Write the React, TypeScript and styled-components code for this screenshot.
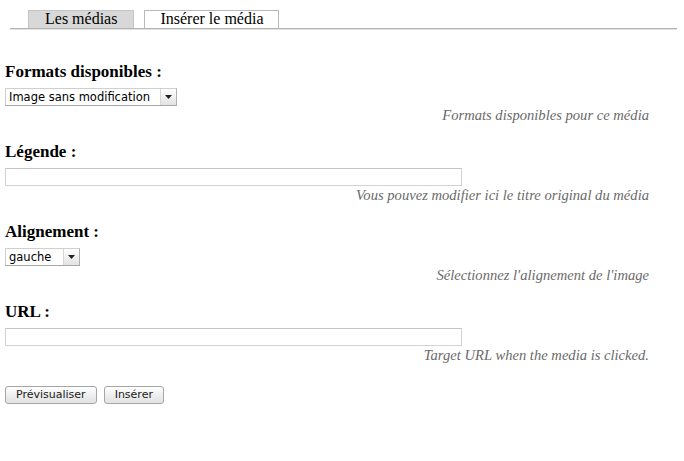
import React, { useState } from 'react';
import styled, { createGlobalStyle } from 'styled-components';

const GlobalStyle = createGlobalStyle`
  html, body {
    margin: 0;
    padding: 0;
    background: #ffffff;
  }
  body {
    font-family: "Liberation Serif", "Times New Roman", serif;
    color: #000000;
  }
`;

const Page = styled.div`
  width: 684px;
  height: 461px;
  padding-top: 10px;
  box-sizing: border-box;
`;

const TabBar = styled.ul`
  display: flex;
  gap: 10px;
  list-style: none;
  margin: 0 7px 0 10px;
  padding: 0 0 0 18px;
  border-bottom: 1px solid #b4b4b4;
  box-shadow: 0 1px 0 #e2e2e2;
`;

const Tab = styled.li<{ $active: boolean }>`
  height: 18px;
  box-sizing: border-box;
  padding: 0 ${({ $active }) => ($active ? 15 : 16)}px;
  font-size: 16px;
  line-height: 16px;
  background: ${({ $active }) => ($active ? '#ffffff' : '#d8d8d8')};
  border: 1px solid ${({ $active }) => ($active ? '#b8b8b8' : '#c4c4c4')};
  border-bottom: none;
  cursor: pointer;
`;

const Form = styled.form`
  padding: 34px 35px 0 5px;
`;

const Field = styled.div`
  display: flex;
  flex-direction: column;
  align-items: flex-start;
  margin-bottom: 20px;
`;

const Label = styled.label`
  font-size: 17px;
  font-weight: bold;
  line-height: 18px;
  margin-bottom: 7px;
`;

const SelectBox = styled.div<{ $width: number }>`
  display: flex;
  width: ${({ $width }) => $width}px;
  height: 18px;
  box-sizing: border-box;
  border: 1px solid #cfcfcf;
  border-right-color: #b0b0b0;
  border-bottom-color: #a8a8a8;
  background: #ffffff;
`;

const Select = styled.select`
  appearance: none;
  flex: 1;
  min-width: 0;
  border: none;
  outline: none;
  background: transparent;
  padding: 0 0 0 3px;
  margin: 0;
  font-family: "DejaVu Sans", Verdana, sans-serif;
  font-size: 11.5px;
  color: #000;
`;

const Arrow = styled.span`
  width: 15px;
  display: flex;
  align-items: center;
  justify-content: center;
  border-left: 1px solid #d6d6d6;
  background: linear-gradient(#ffffff, #e2e2e2);
`;

const TextInput = styled.input`
  width: 457px;
  height: 18px;
  box-sizing: border-box;
  border: 1px solid #d2d2d2;
  border-top-color: #c4c4c4;
  margin: 0;
  padding: 0 3px;
  outline: none;
  font-family: "DejaVu Sans", Verdana, sans-serif;
  font-size: 11px;
`;

const Help = styled.div`
  align-self: stretch;
  text-align: right;
  margin-top: 2px;
  font-size: 14.6px;
  line-height: 15px;
  font-style: italic;
  color: #6a6a6a;
`;

const Actions = styled.div`
  display: flex;
  gap: 7px;
  padding-top: 3px;
`;

const Button = styled.button`
  height: 18px;
  box-sizing: border-box;
  padding: 0 10px;
  border: 1px solid #a6a6a6;
  border-radius: 3px;
  background: linear-gradient(#ffffff, #ececec 60%, #e2e2e2);
  font-family: "DejaVu Sans", Verdana, sans-serif;
  font-size: 11px;
  color: #1a1a1a;
  line-height: 14px;
  cursor: pointer;
`;

const ArrowIcon = () => (
  <svg width="7" height="4" viewBox="0 0 7 4">
    <path d="M0 0h7L3.5 4z" fill="#222" />
  </svg>
);

const Dropdown: React.FC<{ width: number; options: string[] }> = ({ width, options }) => (
  <SelectBox $width={width}>
    <Select>
      {options.map((o) => (
        <option key={o}>{o}</option>
      ))}
    </Select>
    <Arrow>
      <ArrowIcon />
    </Arrow>
  </SelectBox>
);

export default function App() {
  const [tab, setTab] = useState('insert');

  return (
    <Page>
      <GlobalStyle />
      <TabBar>
        <Tab $active={tab === 'list'} onClick={() => setTab('list')}>
          Les médias
        </Tab>
        <Tab $active={tab === 'insert'} onClick={() => setTab('insert')}>
          Insérer le média
        </Tab>
      </TabBar>
      <Form onSubmit={(e) => e.preventDefault()}>
        <Field>
          <Label>Formats disponibles :</Label>
          <Dropdown width={172} options={['Image sans modification', 'Miniature']} />
          <Help>Formats disponibles pour ce média</Help>
        </Field>
        <Field>
          <Label>Légende :</Label>
          <TextInput type="text" />
          <Help>Vous pouvez modifier ici le titre original du média</Help>
        </Field>
        <Field>
          <Label>Alignement :</Label>
          <Dropdown width={75} options={['gauche', 'droite', 'centre']} />
          <Help>Sélectionnez l'alignement de l'image</Help>
        </Field>
        <Field>
          <Label>URL :</Label>
          <TextInput type="text" />
          <Help>Target URL when the media is clicked.</Help>
        </Field>
        <Actions>
          <Button type="button">Prévisualiser</Button>
          <Button type="submit">Insérer</Button>
        </Actions>
      </Form>
    </Page>
  );
}
